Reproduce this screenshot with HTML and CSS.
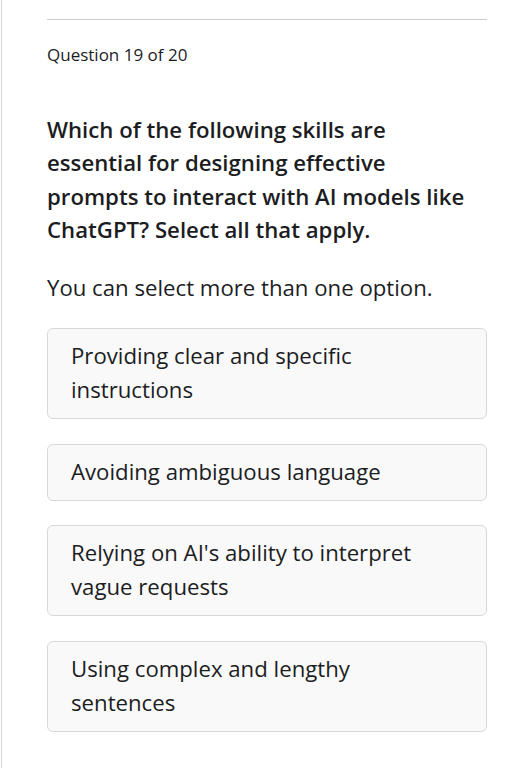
FILE: index.html
```html
<!DOCTYPE html>
<html lang="en">
<head>
<meta charset="utf-8">
<title>Question 19 of 20</title>
<link rel="stylesheet" href="styles.css">
</head>
<body>
<div class="page">
  <div class="rule"></div>
  <div class="label">Question 19 of 20</div>
  <h1 class="prompt">Which of the following skills are essential for designing effective prompts to interact with AI models like ChatGPT? Select all that apply.</h1>
  <p class="hint">You can select more than one option.</p>
  <ul class="options">
    <li class="option">Providing clear and specific instructions</li>
    <li class="option">Avoiding ambiguous language</li>
    <li class="option">Relying on AI's ability to interpret vague requests</li>
    <li class="option">Using complex and lengthy sentences</li>
  </ul>
</div>
</body>
</html>
```
FILE: styles.css
```css
html, body {
  margin: 0;
  padding: 0;
  background: #ffffff;
}
body {
  font-family: "Open Sans", "Noto Sans", sans-serif;
  color: #1c1d1f;
}
.page {
  box-sizing: border-box;
  min-height: 100vh;
  margin-left: 1px;
  border-left: 1px solid #d1d7dc;
  padding: 19px 40px 0 45px;
}
.rule {
  border-top: 1px solid #c8cbcf;
}
.label {
  margin-top: 23px;
  font-size: 17px;
  line-height: 24px;
  font-weight: 500;
}
.prompt {
  margin: 46px 0 0;
  padding-right: 14px;
  font-size: 22.2px;
  line-height: 1.5;
  font-weight: 600;
}
.hint {
  margin: 25px 0 0;
  font-size: 22.2px;
  line-height: 1.5;
  font-weight: 400;
}
.options {
  list-style: none;
  margin: 23.6px 0 0;
  padding: 0;
  display: flex;
  flex-direction: column;
  gap: 24.5px;
}
.option {
  background: #f9f9f9;
  border: 1px solid #d6d9dc;
  border-radius: 6px;
  padding: 10px 46px 11px 23px;
  font-size: 22.2px;
  line-height: 34px;
}
```
